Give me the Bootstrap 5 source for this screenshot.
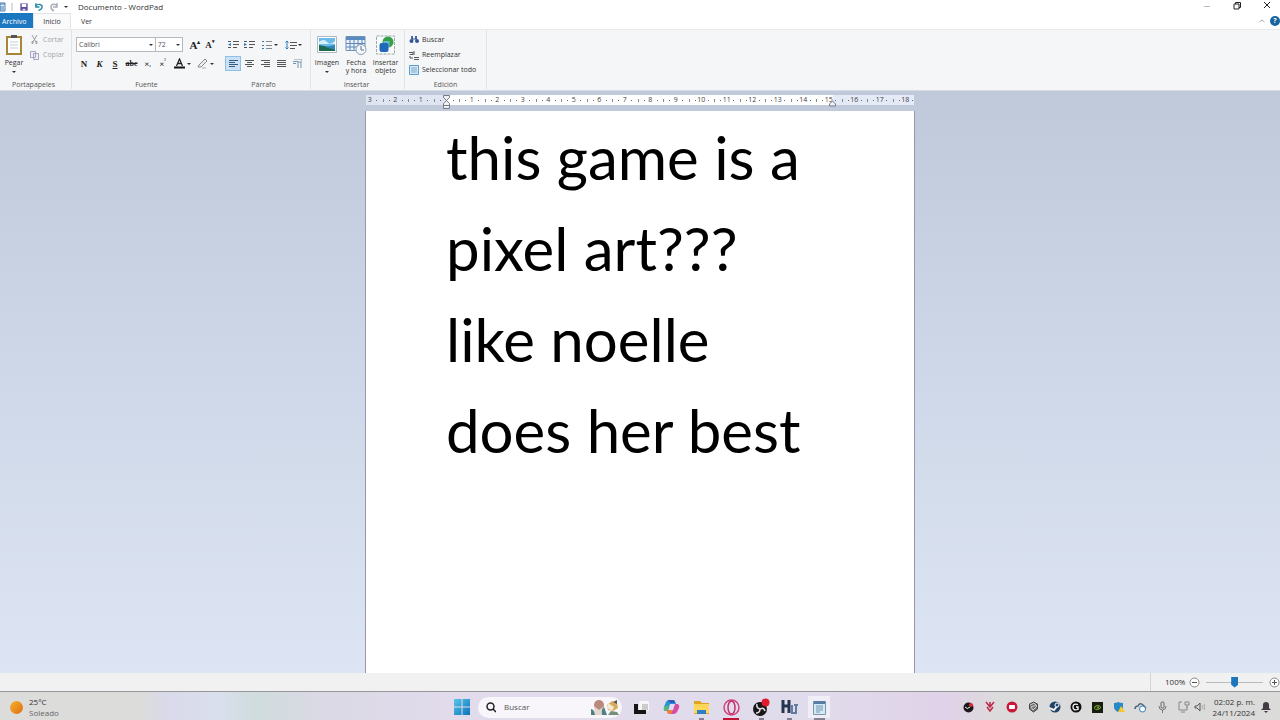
<!DOCTYPE html>
<html lang="es">
<head>
<meta charset="utf-8">
<meta name="viewport" content="width=device-width, initial-scale=1">
<title>Documento - WordPad</title>
<link href="https://cdn.jsdelivr.net/npm/bootstrap@5.3.0/dist/css/bootstrap.min.css" rel="stylesheet">
<style>
body{font-family:"Open Sans","Noto Sans",sans-serif;font-size:7px;line-height:10px;color:#333;background:#fff}
svg{display:block;flex:none}
button,select,input{font:inherit;color:inherit}
button{border:0;background:none;padding:0}
.titlebar{height:13px;font-size:8px;line-height:12px}
.titlebar svg{margin-right:5px}
.tabs{height:16px;font-size:7px;line-height:17px}
.tabs a{color:#333;text-decoration:none}
.tabs .file{background:#1b77c0;color:#fff;width:33px;padding-left:2px;height:15px}
.tabs .home{width:38px;text-align:center;border:1px solid #e3e4e6;border-bottom:0;background:#fafafb;line-height:15px}
.ribbon{height:62px;background:#f5f6f7;border-top:1px solid #e8e9eb;border-bottom:1px solid #d8dce4}
.group{border-right:1px solid #e2e3e5;height:59px}
.tools{height:50px}
.group-name{text-align:center;line-height:10px;color:#555}
.g-clip{width:72px}.g-font{width:145px;padding-left:4px;border:0}.g-par{width:94px;border-right:1px solid #e2e3e5}.g-ins{width:94px}.g-edit{width:82px}
.muted{color:#a5a5a8}
.tool-row{height:19px}
.cell{width:16px;height:15px;display:flex;align-items:center;justify-content:center;flex:none}
.glyph{font-family:"Liberation Serif",serif;font-weight:700;font-size:9px;line-height:12px;color:#222}
.active-cell{background:#c9e0f7;border:1px solid #92c0e0}
.drop{width:0;height:0;border:2px solid transparent;border-top-color:#333;border-bottom:0;flex:none}
.box-select{appearance:none;border:1px solid #b8b9bc;border-radius:0;height:15px;padding:0 2px;color:#555;background:#fff url("data:image/svg+xml,%3Csvg xmlns='http://www.w3.org/2000/svg' width='4' height='2'%3E%3Cpath d='M0 0h4L2 2z' fill='%23333'/%3E%3C/svg%3E") no-repeat right 2px center;line-height:12px}
.face{width:82px}.size{width:29px;margin-left:-1px}
.big{width:28px;display:flex;flex-direction:column;align-items:center;line-height:8px}
.big svg{margin-bottom:4px}
.find{height:15px;display:flex;align-items:center;gap:2px}
.work{background:linear-gradient(#bfc9da,#cfd8e8 50%,#dde5f4);overflow:hidden;padding-top:4px}
.paper-col{width:550px}
.ruler{height:10px;overflow:hidden;background:linear-gradient(90deg,#dfe6f2 80px,#fff 80px,#fff 467px,#e4eaf6 467px);margin:0 1px 6px}
.scale{display:grid;grid-template-columns:repeat(22,1fr);width:561px;margin-left:-9px;font-size:7px;line-height:10px;color:#444;text-align:center}
.scale span{background:linear-gradient(#888,#888) 0 4px/1px 3px no-repeat,linear-gradient(#666,#666) 6px 5px/1px 1px no-repeat,linear-gradient(#666,#666) 19px 5px/1px 1px no-repeat}
.rulerbox{position:relative}
.mark-left{position:absolute;left:78px;top:-1px}
.mark-right{position:absolute;left:464px;top:5px}
.paper{background:#fff;border-left:1px solid #9199aa;border-right:1px solid #9199aa;padding:1px 60px 0 80px;color:#000;font-family:Lato,sans-serif;font-size:60px;line-height:91px;outline:0}
.paper p{margin:0;white-space:nowrap}
.status{height:18px;background:#f1f1f2;line-height:18px}
.zoom-box{border-left:1px solid #d5d5d6;padding-left:14px;width:130px;gap:4px}
.zoom-range{appearance:none;width:62px;min-width:0;height:14px;background:linear-gradient(#bbb,#bbb) center/100% 1px no-repeat;margin:0 2px}
.zoom-range::-webkit-slider-thumb{appearance:none;width:7px;height:11px;background:#1976bf;clip-path:polygon(0 0,100% 0,100% 75%,50% 100%,0 75%)}
.taskbar{height:29px;border-top:1px solid #96969c;display:grid;grid-template-columns:1fr auto 1fr;background:linear-gradient(90deg,#dcdcdb 0,#dcdcdb 11%,#d9d9e9 13%,#dadfee 17%,#cfdcdc 20%,#dbd9e5 25%,#e1dbec 35%,#e1dcec 63%,#e0d2e8 74%,#dcdbdc 78%,#dbdbda)}
.weather{gap:5px;padding:2px 0 0 9px;line-height:11px}
.task{width:30px;height:28px;position:relative;display:flex;align-items:center;justify-content:center;padding-top:2px}
.task.run::after{content:"";position:absolute;bottom:0;width:5px;height:2px;background:#858090}
.task.opera::after{width:16px;background:#c21334}
.task.current{background:linear-gradient(#f0edf6,#f0edf6) center 4px/22px 22px no-repeat}
.task.current::after{width:11px}
.search{width:144px;height:21px;border-radius:11px;background:#f8f5fb;padding:0 2px 0 8px;gap:8px;margin-top:2px}
.search input{border:0;background:none;outline:0;width:78px;padding:0;font-size:8px}
.search input::placeholder{color:#555;opacity:1}
.tray{padding-top:2px}
.tray button{width:21px;display:flex;justify-content:center;align-items:center;flex:none}
.clock{text-align:right;line-height:11px;width:50px;font-size:8px;letter-spacing:normal;white-space:nowrap}
</style>
</head>
<body>
<div class="vh-100 d-flex flex-column overflow-hidden">
<header class="flex-shrink-0">
 <div class="titlebar d-flex align-items-center">
  <svg width="6" height="12" viewBox="0 0 6 12"><path d="M0 2h5v8H0z" fill="#e3effa" stroke="#4f80b5"/><path d="M0 3h5M0 6h4M0 8h4" stroke="#4f80b5"/></svg>
  <svg width="3" height="12"><path d="M1 2v8" stroke="#bbb"/></svg>
  <svg width="10" height="12" viewBox="0 0 11 12"><path d="M1.500 2h8v8h-8z" fill="#5d4b9b"/><path d="M3 2.500h5V6H3z" fill="#fff"/><path d="M4 8h3v2H4z" fill="#ded9f0"/></svg>
  <svg width="10" height="12" viewBox="0 0 11 12"><path d="M2 2v4h4M2 5c2-3 7-2 7 1 0 2-2 3-4 4" fill="none" stroke="#2589a6" stroke-width="1.500"/></svg>
  <svg width="10" height="12" viewBox="0 0 10 12"><path d="M8 2v4H4M8 5C6 2 2 3 2 6c0 2 1 3 3 4" fill="none" stroke="#aaadba" stroke-width="1.500"/></svg>
  <span class="drop"></span>
  <span style="margin-left:10px">Documento - WordPad</span>
  <div class="d-flex ms-auto">
   <button aria-label="Minimizar" style="width:30px"><svg width="10" height="12"><path d="M2 5.500h6" stroke="#bbb"/></svg></button>
   <button aria-label="Restaurar" style="width:30px"><svg width="10" height="12" viewBox="0 0 10 12"><path d="M2 3h5v5H2zM3.500 3V1.500h5v5H7" fill="none" stroke="#222"/></svg></button>
   <button aria-label="Cerrar" style="width:18px"><svg width="10" height="12"><path d="m2 1 6 6M8 1 2 7" stroke="#222"/></svg></button>
  </div>
 </div>
 <nav class="tabs d-flex" aria-label="Cinta">
  <a class="file" href="#">Archivo</a><a class="home" href="#">Inicio</a><a href="#" style="padding-left:10px">Ver</a>
  <div class="ms-auto d-flex align-items-center gap-1">
   <svg width="8" height="8"><path d="m1.500 5 2.500-2L6.500 5" fill="none" stroke="#aaa"/></svg>
   <button class="rounded-circle text-white fw-bold" aria-label="Ayuda" style="background:#17649e;width:10px;height:10px;line-height:10px">?</button>
  </div>
 </nav>
 <div class="ribbon d-flex">
  <section class="group g-clip">
   <div class="tools d-flex">
    <button class="big" style="padding-top:4px"><svg width="20" height="21" viewBox="0 0 20 21"><path d="M3 3h14v17H3z" fill="#fff" stroke="#a98538" stroke-width="2"/><path d="M7 4V1h6v3z" fill="#555"/><path d="M6 8h8M6 11h8M6 14h8" stroke="#c5cbd3"/></svg>Pegar<span class="drop mt-1"></span></button>
    <div class="muted" style="padding:2px 0 0 2px">
     <button class="find" style="gap:4px"><svg width="9" height="10"><path d="m2 0 4 7M7 0 3 7" stroke="#999ca5"/><path d="M2 6.500h1v2H2zM6 6.500h1v2H6z" stroke="#999ca5" fill="none"/></svg>Cortar</button>
     <button class="find" style="gap:4px"><svg width="9" height="10"><path d="M.5 1.500h5v6h-5zM3.500 3.500h5v6h-5z" fill="#eef" stroke="#a4a8bd"/></svg>Copiar</button>
    </div>
   </div><div class="group-name" style="padding-right:4px">Portapapeles</div>
  </section>
  <section class="group g-font">
   <div class="tools" style="padding-top:7px">
    <div class="d-flex tool-row">
     <select class="box-select face" aria-label="Fuente"><option>Calibri</option></select>
     <select class="box-select size" aria-label="Tamaño"><option>72</option></select>
     <button class="cell glyph ms-1" style="font-size:11px" aria-label="Agrandar">A<sup style="font-size:6px">▴</sup></button>
     <button class="cell glyph" style="width:14px" aria-label="Reducir">A<sup style="font-size:5px">▾</sup></button>
    </div>
    <div class="d-flex">
     <button class="cell glyph">N</button><button class="cell glyph fst-italic" style="width:15px">K</button><button class="cell glyph text-decoration-underline">S</button><button class="cell glyph text-decoration-line-through" style="width:17px;font-size:8px">abc</button><button class="cell glyph" style="width:15px">×<sub style="font-size:5px">₂</sub></button><button class="cell glyph" style="width:15px">×<sup style="font-size:5px">²</sup></button>
     <button class="cell glyph" style="width:24px;gap:2px" aria-label="Color"><svg width="11" height="11" viewBox="0 0 11 11"><path d="M2.500 8 5.500 1l3 7M3.500 5.500h4" fill="none" stroke="#222" stroke-width="1.300"/><path d="M0 9.500h11" stroke="#111" stroke-width="2"/></svg><span class="drop"></span></button>
     <button class="cell" style="width:22px;gap:2px" aria-label="Resaltar"><svg width="11" height="11" viewBox="0 0 11 11"><path d="m2 7 6-6 2 2-6 6H1z" fill="#eee" stroke="#888"/><path d="M5 10h4" stroke="#aaa"/></svg><span class="drop"></span></button>
    </div>
   </div><div class="group-name">Fuente</div>
  </section>
  <section class="group g-par">
   <div class="tools" style="padding:7px 0 0 8px">
    <div class="d-flex tool-row">
     <button class="cell" aria-label="Menos sangría"><svg width="11" height="10"><path d="M5 1.500h6M5 4.500h6M5 7.500h4M0 1.500h3M0 7.500h3" stroke="#555"/><path d="M0 4.500 3 3v3z" fill="#287ac0"/></svg></button>
     <button class="cell" aria-label="Más sangría"><svg width="11" height="10"><path d="M5 1.500h6M5 4.500h6M5 7.500h4M0 1.500h3M0 7.500h3" stroke="#555"/><path d="M3 4.500 0 3v3z" fill="#287ac0"/></svg></button>
     <button class="cell ms-1" style="width:18px;gap:2px" aria-label="Viñetas"><svg width="10" height="10"><path d="M0 1.500h2M0 5.500h2M0 8.500h2" stroke="#287ac0"/><path d="M4 1.500h6M4 5.500h6M4 8.500h6" stroke="#888"/></svg><span class="drop"></span></button>
     <button class="cell" style="width:22px;gap:1px;margin-left:3px" aria-label="Interlineado"><svg width="12" height="10"><path d="M2 1v8M.5 2.500 2 1l1.500 1.500M.5 7.500 2 9l1.500-1.500" fill="none" stroke="#287ac0"/><path d="M5 2.500h7M5 5.500h7M5 8.500h5" stroke="#555"/></svg><span class="drop"></span></button>
    </div>
    <div class="d-flex">
     <button class="cell active-cell" aria-label="Izquierda"><svg width="9" height="9"><path d="M0 1.500h9M0 3.500h6M0 5.500h9M0 7.500h6" stroke="#345b7c"/></svg></button>
     <button class="cell" aria-label="Centrar"><svg width="9" height="9"><path d="M0 1.500h9M2 3.500h5M0 5.500h9M2 7.500h5" stroke="#555"/></svg></button>
     <button class="cell" aria-label="Derecha"><svg width="9" height="9"><path d="M0 1.500h9M3 3.500h6M0 5.500h9M3 7.500h6" stroke="#555"/></svg></button>
     <button class="cell" aria-label="Justificar"><svg width="9" height="9"><path d="M0 1.500h9M0 3.500h9M0 5.500h9M0 7.500h9" stroke="#555"/></svg></button>
     <button class="cell" aria-label="Párrafo"><svg width="10" height="10"><path d="M1 2.500h5M1 4.500h3M2 0h8v3M6 9V3h3v6" fill="none" stroke="#7895ac"/></svg></button>
    </div>
   </div><div class="group-name">Párrafo</div>
  </section>
  <section class="group g-ins">
   <div class="tools d-flex" style="padding:5px 3px 0 1px">
    <button class="big" style="width:30px"><svg width="20" height="20" viewBox="0 0 20 20"><path d="M.5 1.500h19v16H.5z" fill="#fff" stroke="#aeb8c0"/><path d="M2 3h16v13H2z" fill="#6cbae8"/><path d="M2 7q5-4 8 0t8-1v3H2z" fill="#d6effa"/><path d="M2 10q7 1 16 4v2H2z" fill="#1c6850"/><path d="m8 12 10-2v5z" fill="#2b85b5"/></svg>Imagen<span class="drop mt-1"></span></button>
    <button class="big"><svg width="22" height="20" viewBox="0 0 22 20"><path d="M1 1.500h19v14H1z" fill="#e9f2fa" stroke="#7292b5"/><path d="M1 2h19v3H1z" fill="#5a8bc0"/><path d="M5 5v10M9 5v10M13 5v10M17 5v10M1 8.500h19M1 12h19" stroke="#5f86b5"/><circle cx="16" cy="14.500" r="5" fill="#f4f8fb" stroke="#8a9baf"/><path d="M16 11v4h3" fill="none" stroke="#54739b"/></svg>Fecha<br>y hora</button>
    <button class="big" style="width:31px"><svg width="21" height="20" viewBox="0 0 20 20"><path d="M1 1h18v18H1z" fill="#f9fafb" stroke="#9aa" stroke-dasharray="3 1"/><circle cx="12.500" cy="7" r="5.500" fill="#35a044"/><path d="M8 6h6v6H8z" fill="#66b9c9"/><rect x="4" y="8" width="9" height="9" rx="2" fill="#2068b8"/></svg>Insertar<br>objeto</button>
   </div><div class="group-name" style="padding-right:2px">Insertar</div>
  </section>
  <section class="group g-edit">
   <div class="tools" style="padding:2px 0 0 4px">
    <button class="find"><svg width="11" height="10"><path d="M2 1h2v3H2zM6 1h2v3H6z" fill="#4b67a5"/><circle cx="2.500" cy="6" r="2" fill="#345696"/><circle cx="8" cy="6" r="2" fill="#345696"/><path d="M3 4h5" stroke="#345696"/></svg>Buscar</button>
    <button class="find"><svg width="11" height="10"><path d="M0 2.500h4v2H1V4M5 1v4M5 7.500h5M5 9.500h5M1 6v2h3" fill="none" stroke="#555"/></svg>Reemplazar</button>
    <button class="find"><svg width="11" height="10"><path d="M.5.5h9v9h-9z" fill="#d7eafa" stroke="#5c9dcc"/><path d="M2 3h6M2 5h6M2 7h6" stroke="#7ba6c8"/></svg>Seleccionar todo</button>
   </div><div class="group-name">Edición</div>
  </section>
 </div>
</header>
<main class="work flex-grow-1 d-flex justify-content-center">
 <div class="paper-col d-flex flex-column">
  <div class="rulerbox">
   <div class="ruler"><div class="scale"><span>3</span><span>2</span><span>1</span><span></span><span>1</span><span>2</span><span>3</span><span>4</span><span>5</span><span>6</span><span>7</span><span>8</span><span>9</span><span>10</span><span>11</span><span>12</span><span>13</span><span>14</span><span>15</span><span>16</span><span>17</span><span>18</span></div></div>
   <svg class="mark-left" width="7" height="16" viewBox="0 0 7 16"><path d="M.5 1.500h6v2l-3 3-3-3zM.5 11.500v-2l3-3 3 3v2zM.5 11.500h6v3h-6z" fill="#eef0f3" stroke="#777d87"/></svg>
   <svg class="mark-right" width="8" height="7"><path d="M.5 6V4l3-3 3 3v2z" fill="#eef0f3" stroke="#777d87"/></svg>
  </div>
  <article class="paper flex-grow-1" contenteditable="true" spellcheck="false"><p>this game is a</p><p>pixel art???</p><p>like noelle</p><p>does her best</p></article>
 </div>
</main>
<footer class="flex-shrink-0">
 <div class="status d-flex justify-content-end">
  <div class="zoom-box d-flex align-items-center"><label for="zoom" style="font-size:8px">100%</label>
   <button aria-label="Alejar"><svg width="11" height="11"><circle cx="5.500" cy="5.500" r="4.500" fill="#fff" stroke="#888"/><path d="M3 5.500h5" stroke="#555"/></svg></button>
   <input class="zoom-range" id="zoom" type="range" min="0" max="100" value="50">
   <button aria-label="Acercar"><svg width="11" height="11"><circle cx="5.500" cy="5.500" r="4.500" fill="#fff" stroke="#888"/><path d="M3 5.500h5M5.500 3v5" stroke="#555"/></svg></button>
  </div>
 </div>
 <div class="taskbar">
  <div class="weather d-flex align-items-center">
   <svg width="15" height="15"><defs><linearGradient id="sun" x2="1" y2="1"><stop stop-color="#f5b52e"/><stop offset="1" stop-color="#e06a12"/></linearGradient></defs><circle cx="7.500" cy="7.500" r="6.500" fill="url(#sun)"/></svg>
   <div style="font-size:8px"><div>25°C</div><div style="color:#666">Soleado</div></div>
  </div>
  <div class="d-flex align-items-center">
   <button class="task" aria-label="Inicio" style="width:33px"><svg width="16" height="16"><defs><linearGradient id="win" x2="1" y2="1"><stop stop-color="#5cc5e8"/><stop offset="1" stop-color="#0873bd"/></linearGradient></defs><path d="M0 0h7.500v7.500H0zM8.500 0H16v7.500H8.500zM0 8.500h7.500V16H0zM8.500 8.500H16V16H8.500z" fill="url(#win)"/></svg></button>
   <div class="search d-flex align-items-center"><svg width="10" height="11"><circle cx="4.500" cy="4.500" r="3.500" fill="none" stroke="#222" stroke-width="1.500"/><path d="m7 7 3 3" stroke="#222" stroke-width="1.500"/></svg>
    <input type="text" placeholder="Buscar" aria-label="Buscar">
    <svg width="30" height="19" viewBox="0 0 30 19"><circle cx="9" cy="7" r="5" fill="#b98a7c"/><path d="M3 17 5 9l4 3 4-3 2 8z" fill="#e2d8d0"/><path d="M1 11q3 0 4 6H1zM14 9q-3 2-2 8h5z" fill="#527f83"/><path d="m17 7 5-4 5 2 1 5-5 3-5-1z" fill="#d9aa5e"/><path d="m18 5 6 4-2 4-5-3z" fill="#f4e9d2"/><path d="m18 17 3-4 6 1 2 3z" fill="#748f7c"/><path d="m23 4 4-2v4z" fill="#555"/></svg></div>
   <button class="task ms-1" aria-label="Vista de tareas"><svg width="15" height="15"><path d="M5 1h10v10H5z" fill="#f6f6f6"/><path d="M8 4h6v6H8z" fill="#ccc"/><path d="M0 4h4v6h8v4H0z" fill="#151515"/></svg></button>
   <button class="task" aria-label="Copilot"><svg width="17" height="16" viewBox="0 0 17 16"><path d="M6 1h4q2 0 3 4H7L5 12H3Q0 12 1 8l2-5q1-2 3-2z" fill="#2594d4"/><path d="M5 1h5q2 0 2 3H7z" fill="#3957b8"/><path d="M12 5h2q3 0 2 4l-2 4q-1 2-4 2H7q-2 0-3-4h6z" fill="#d44ca5"/><path d="m4 11h6l-2 4H6q-2 0-2-4z" fill="#f17d3e"/><path d="m1 8 5-2-2 6H3Q0 12 1 8z" fill="#5eb774"/></svg></button>
   <button class="task run" aria-label="Explorador"><svg width="17" height="15"><path d="M1 1h6l2 2h7v11H1z" fill="#dfa41f"/><path d="M1 4h15v9H1z" fill="#ffd65a"/><path d="M4 10h9v4H4z" fill="#2b7fc2"/></svg></button>
   <button class="task run opera" aria-label="Opera"><svg width="17" height="17"><circle cx="8.500" cy="8.500" r="7.500" fill="none" stroke="#d0437b" stroke-width="1.500"/><ellipse cx="8.500" cy="8.500" rx="3.500" ry="6.500" fill="none" stroke="#c52f6c" stroke-width="1.500"/></svg></button>
   <button class="task run" aria-label="OBS"><svg width="18" height="19" viewBox="0 0 18 19"><circle cx="8" cy="11" r="7" fill="#171717"/><path d="M8 11q-4-1-3-5M8 11q4-2 5 2M8 11q0 4-4 4" fill="none" stroke="#ddd" stroke-width="1.500"/><circle cx="13.500" cy="4.500" r="4" fill="#df1b2e"/></svg></button>
   <button class="task run" aria-label="Editor" style="width:27px"><svg width="17" height="17"><path d="M2 1v13M8 1v13M2 7h6" stroke="#25354f" stroke-width="3"/><path d="M11 6v9M15 6v9M11 14h5M13 6h4" stroke="#617ca0" stroke-width="2"/></svg></button>
   <button class="task run current" aria-label="WordPad" style="width:32px"><svg width="13" height="15"><path d="M.5 1.500h12v13H.5z" fill="#d5e9f4" stroke="#7996ab"/><path d="M1 1h11v3H1z" fill="#567ea4"/><path d="M3 6h7M3 8h7M3 10h7M3 12h4" stroke="#7095b3"/></svg></button>
  </div>
  <div class="tray d-flex align-items-center justify-content-end">
   <button aria-label="OBS"><svg width="11" height="11"><circle cx="5.500" cy="5.500" r="5" fill="#1b181b"/><path d="M2 5q2 3 5 0" stroke="#eee" fill="none"/><circle cx="8" cy="3" r="2" fill="#d92c3b"/></svg></button>
   <button aria-label="Volumen de voz" style="width:22px"><svg width="10" height="12"><path d="m1 1 4 5 4-5M5 1v4M2 6l3 4 3-4" fill="none" stroke="#bc2947" stroke-width="1.500"/></svg></button>
   <button aria-label="Grabador"><svg width="12" height="12"><circle cx="6" cy="6" r="5.500" fill="#ca1837"/><rect x="3" y="4" width="6" height="4" rx="1" fill="#fff"/></svg></button>
   <button aria-label="Asistente" style="width:22px"><svg width="11" height="12"><path d="m5.500 1 4 2v5l-4 3-4-3V3z" fill="#777" stroke="#444"/><path d="m2 4 4-2 3 3-4 4-2-3 5-2" fill="none" stroke="#ccc"/></svg></button>
   <button aria-label="Steam"><svg width="12" height="12"><circle cx="6" cy="6" r="5.500" fill="#204469"/><path d="m0 7 5 2 4-5" stroke="#eee" stroke-width="2" fill="none"/><circle cx="8" cy="4" r="2" fill="#204469" stroke="#fff"/></svg></button>
   <button aria-label="Logitech" style="width:22px"><svg width="12" height="12"><circle cx="6" cy="6" r="5.500" fill="#111"/><path d="M8 3.500Q3 2 3 6t5 2.500V6H6" fill="none" stroke="#fff" stroke-width="1.300"/></svg></button>
   <button aria-label="NVIDIA"><svg width="11" height="11"><path d="M0 0h11v11H0z" fill="#171c10"/><path d="M2 5.500q4-4 7 0-4 4-7 0z" fill="none" stroke="#89ba36"/><circle cx="6" cy="5.500" r="1" fill="#89ba36"/></svg></button>
   <button aria-label="Seguridad" style="width:22px"><svg width="12" height="12"><path d="M1 2q3 0 4-1 2 1 5 1v4q0 3-5 5-4-2-4-5z" fill="#2689c5"/><path d="m8 5 4 6H5z" fill="#f7c82d"/></svg></button>
   <button aria-label="OneDrive"><svg width="13" height="12"><path d="M1 8q0-3 3-3 2-4 5-1l3 3" fill="none" stroke="#50647b" stroke-width="1.500"/><circle cx="8.500" cy="8" r="3" fill="#fff" stroke="#347fbb"/></svg></button>
   <button aria-label="Micrófono" style="width:22px"><svg width="9" height="12"><rect x="3" y="1" width="3" height="6" rx="1" fill="none" stroke="#666"/><path d="M1 5q0 4 3.500 4T8 5M4.500 9v3" fill="none" stroke="#777"/></svg></button>
   <button aria-label="Red"><svg width="12" height="12"><path d="M4 1H1v8h8V6M3 11h4M7 1h4v3H7zM9 4v3" fill="none" stroke="#888"/></svg></button>
   <button aria-label="Volumen" style="width:11px"><svg width="11" height="10"><path d="M1 4h2l3-3v8L3 6H1z" fill="none" stroke="#555"/><path d="M8 3q2 2 0 4M10 2q2 3 0 6" fill="none" stroke="#aaa"/></svg></button>
   <div class="clock"><div>02:02 p.&nbsp;m.</div><div>24/11/2024</div></div>
   <button aria-label="Notificaciones" style="margin-right:4px"><svg width="10" height="12"><path d="M0 9 2 7V4q0-3 3-3t3 3v3l2 2zM3 10h4l-2 2z" fill="#443b42"/></svg></button>
  </div>
 </div>
</footer>
</div>
<script src="https://cdn.jsdelivr.net/npm/bootstrap@5.3.0/dist/js/bootstrap.bundle.min.js"></script>
</body>
</html>
